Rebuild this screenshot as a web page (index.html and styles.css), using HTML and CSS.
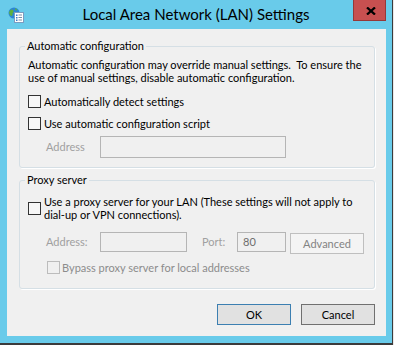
FILE: index.html
```html
<!DOCTYPE html>
<html lang="en">
<head>
  <meta charset="UTF-8" />
  <meta name="viewport" content="width=device-width, initial-scale=1.0"/>
  <title>Local Area Network (LAN) Settings</title>
  <link rel="stylesheet" href="styles.css">
</head>
<body>
  <div class="window">
    <div class="titlebar">
      <svg class="app-icon" width="16" height="16" viewBox="0 0 16 16">
        <circle cx="6" cy="6" r="5.5" fill="#2c86d6"/>
        <path d="M2 3.5 C3.5 2 5 2.5 5.5 4 C6 5.5 4 6 4.5 7.5 C5 9 3 9.5 2 8 C0.8 6.5 1 4.5 2 3.5 Z" fill="#5cb040"/>
        <path d="M7 1.2 C8.5 1.5 9.5 2.5 9 3.5 C8 3.8 7.2 2.8 7 1.2 Z" fill="#5cb040"/>
        <rect x="6.5" y="5.5" width="9" height="10" fill="#fff" stroke="#7c9cc0"/>
        <rect x="8" y="7.5" width="1.5" height="1.5" fill="#3a78c8"/>
        <rect x="10.5" y="7.5" width="3.5" height="1" fill="#7a8fa8"/>
        <rect x="8" y="10" width="1.5" height="1.5" fill="#3a78c8"/>
        <rect x="10.5" y="10" width="3.5" height="1" fill="#7a8fa8"/>
        <rect x="8" y="12.5" width="1.5" height="1.5" fill="#3a78c8"/>
        <rect x="10.5" y="12.5" width="3.5" height="1" fill="#7a8fa8"/>
      </svg>
      <span class="title">Local Area Network (LAN) Settings</span>
      <div class="close-btn">
        <svg width="10" height="8" viewBox="0 0 10 8">
          <path d="M1 0.5 L9 7.5 M9 0.5 L1 7.5" stroke="#000" stroke-width="2.3"/>
        </svg>
      </div>
    </div>

    <div class="client">
      <fieldset class="group group-auto">
        <legend>Automatic configuration</legend>
        <p class="note">Automatic configuration may override manual settings.&nbsp; To ensure the<br>use of manual settings, disable automatic configuration.</p>
        <label class="check check-first"><span class="box"></span>Automatically detect settings</label>
        <label class="check check-second"><span class="box"></span>Use automatic configuration script</label>
        <div class="field-row field-script">
          <span class="field-label">Address</span>
          <span class="textbox textbox-script"></span>
        </div>
      </fieldset>

      <fieldset class="group group-proxy">
        <legend>Proxy server</legend>
        <label class="check check-proxy"><span class="box"></span><span>Use a proxy server for your LAN (These settings will not apply to<br>dial-up or VPN connections).</span></label>
        <div class="field-row field-proxy">
          <span class="field-label">Address:</span>
          <span class="textbox textbox-address"></span>
          <span class="field-label port-label">Port:</span>
          <span class="textbox textbox-port">80</span>
          <span class="btn btn-disabled">Advanced</span>
        </div>
        <label class="check check-bypass disabled"><span class="box"></span>Bypass proxy server for local addresses</label>
      </fieldset>

      <div class="actions">
        <span class="btn btn-default">OK</span>
        <span class="btn">Cancel</span>
      </div>
    </div>
  </div>
</body>
</html>
```

FILE: styles.css
```css
body {
  margin: 0;
  background: #e8e8e8;
  font-family: Lato, 'Liberation Sans', sans-serif;
  font-size: 11px;
  color: #000;
}
.window {
  width: 379px;
  height: 336px;
  padding: 0 6px 7px 7px;
  display: flex;
  flex-direction: column;
  background: #69cbea;
  border-right: 1px solid #3b3b3b;
  border-bottom: 2px solid #3b3b3b;
}
.titlebar {
  height: 29px;
  flex: none;
  margin: 0 -6px 0 -7px;
  display: grid;
  grid-template-columns: 1fr auto 1fr;
}
.app-icon {
  margin: 7px 0 0 8px;
}
.title {
  font-size: 15px;
  line-height: 29px;
  color: #000;
}
.close-btn {
  justify-self: end;
  width: 31px;
  height: 20px;
  margin-right: 6px;
  background: #c75050;
  border: 1px solid #963838;
  border-top: none;
  display: flex;
  align-items: center;
  justify-content: center;
}
.close-btn svg {
  margin: 1px 0 0 2px;
}
.client {
  flex: 1;
  background: #f0f0f0;
  padding: 0 11px 0 12px;
}
.group {
  margin: 0;
  min-width: 0;
  border: 1px solid #d5dfe5;
  border-radius: 3px;
  box-shadow: 1px 1px 0 #fff;
  padding: 0 10px 9px 8px;
}
.group legend {
  margin-left: -3px;
  padding: 0 2px;
  line-height: 14px;
}
.group-auto {
  margin-top: 10px;
  padding-top: 5px;
}
.group-proxy {
  margin-top: 5px;
  padding-top: 8px;
  padding-bottom: 14px;
}
.note {
  margin: 0;
  line-height: 13px;
  white-space: nowrap;
}
.check {
  display: flex;
  align-items: center;
  gap: 3px;
  line-height: 13px;
  white-space: nowrap;
}
.box {
  width: 11px;
  height: 11px;
  border: 1px solid #333;
  background: #f7f7f7;
  flex: none;
}
.check-first {
  margin-top: 11px;
}
.check-second {
  margin-top: 9px;
}
.check-bypass {
  margin: 7px 0 0 19px;
  gap: 2px;
  color: #8c8c8c;
}
.check-bypass .box {
  border-color: #bcbcbc;
  background: #f0f0f0;
}
.field-row {
  display: flex;
  align-items: flex-start;
  padding-left: 18px;
}
.field-label {
  width: 54px;
  color: #a0a0a0;
  line-height: 20px;
}
.field-script {
  margin-top: 6px;
}
.field-script .field-label {
  line-height: 22px;
}
.field-proxy {
  margin-top: 11px;
}
.textbox {
  box-sizing: border-box;
  border: 1px solid #b5b5b5;
  background: #f0f0f0;
  color: #6d6d6d;
  height: 20px;
  line-height: 18px;
  padding-left: 5px;
}
.textbox-script {
  width: 186px;
  height: 22px;
}
.textbox-address {
  width: 87px;
}
.port-label {
  width: 35px;
  margin-left: 15px;
}
.textbox-port {
  width: 49px;
}
.btn {
  box-sizing: border-box;
  width: 74px;
  height: 21px;
  line-height: 19px;
  text-align: center;
  border: 1px solid #707070;
  background: #e1e1e1;
}
.btn-disabled {
  margin: 1px 0 0 4px;
  border-color: #bfbfbf;
  background: #f4f4f4;
  color: #838383;
}
.btn-default {
  border-color: #3c7fb1;
}
.actions {
  margin-top: 15px;
  display: flex;
  justify-content: flex-end;
  gap: 10px;
}
```
